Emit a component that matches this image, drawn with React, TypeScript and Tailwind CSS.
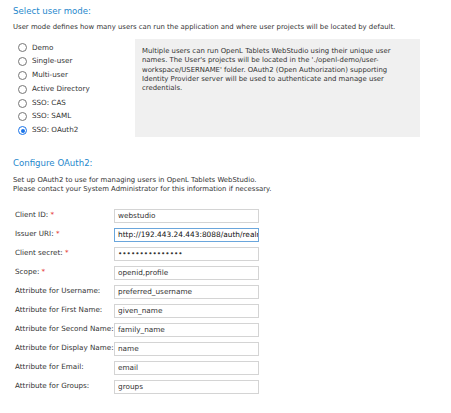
import { useState } from "react";

const modes = [
  "Demo",
  "Single-user",
  "Multi-user",
  "Active Directory",
  "SSO: CAS",
  "SSO: SAML",
  "SSO: OAuth2",
];

const fields = [
  { label: "Client ID:", value: "webstudio", required: true },
  { label: "Issuer URI:", value: "http://192.443.24.443:8088/auth/realms/openl", required: true, focused: true },
  { label: "Client secret:", value: "***************", required: true, secret: true },
  { label: "Scope:", value: "openid,profile", required: true },
  { label: "Attribute for Username:", value: "preferred_username" },
  { label: "Attribute for First Name:", value: "given_name" },
  { label: "Attribute for Second Name:", value: "family_name" },
  { label: "Attribute for Display Name:", value: "name" },
  { label: "Attribute for Email:", value: "email" },
  { label: "Attribute for Groups:", value: "groups" },
];

function Radio({ checked }: { checked: boolean }) {
  return checked ? (
    <span className="w-[9px] h-[9px] rounded-full border-[1.5px] border-[#1a73e8] flex items-center justify-center shrink-0">
      <span className="w-[4px] h-[4px] rounded-full bg-[#1a73e8]" />
    </span>
  ) : (
    <span className="w-[9px] h-[9px] rounded-full border border-[#767676] bg-white shrink-0" />
  );
}

export default function App() {
  const [mode, setMode] = useState("SSO: OAuth2");

  return (
    <div className="w-[451px] h-[413px] bg-white overflow-hidden pl-[13px] pt-[5px] text-[#333] font-['DejaVu_Sans',Verdana,sans-serif]">
      {/* === USER MODE === */}
      <h2 className="text-[8.6px] leading-[12px] text-[#1f88cc]">Select user mode:</h2>
      <p className="mt-[5px] text-[6.9px] leading-[10px]">
        User mode defines how many users can run the application and where user projects will be located by default.
      </p>

      <div className="mt-[7px] flex">
        <div className="w-[122px] pt-[2px]">
          {modes.map((m) => (
            <label
              key={m}
              onClick={() => setMode(m)}
              className="h-[13.8px] flex items-center gap-[5px] pl-[5px] text-[7.2px] cursor-pointer"
            >
              <Radio checked={mode === m} />
              {m}
            </label>
          ))}
        </div>
        <div className="w-[285px] h-[98px] bg-[#f0f0f0] pl-[7px] pr-[10px] pt-[8px] text-[6.9px] leading-[9.3px]">
          Multiple users can run OpenL Tablets WebStudio using their unique user names. The User's projects will be
          located in the './openl-demo/user-workspace/USERNAME' folder. OAuth2 (Open Authorization) supporting
          Identity Provider server will be used to authenticate and manage user credentials.
        </div>
      </div>

      {/* === OAUTH2 === */}
      <h2 className="mt-[19.7px] text-[8.6px] leading-[12px] text-[#1f88cc]">Configure OAuth2:</h2>
      <p className="mt-[6.8px] text-[6.9px] leading-[9px]">
        Set up OAuth2 to use for managing users in OpenL Tablets WebStudio.
        <br />
        Please contact your System Administrator for this information if necessary.
      </p>

      <div className="mt-[14.5px] flex flex-col gap-[5px] pl-[2px]">
        {fields.map((f) => (
          <div key={f.label} className="flex items-center h-[14px]">
            <span className="w-[99px] text-[7.2px] whitespace-nowrap">
              {f.label}
              {f.required && <span className="text-[#e53935]"> *</span>}
            </span>
            {f.focused ? (
              <div className="w-[145px] h-[14px] border border-[#6aa6dc] px-[3px] flex items-center overflow-hidden whitespace-nowrap text-[7.4px] text-[#111]">
                http://192.443.24
                <span className="inline-block w-px h-[9px] bg-[#111]" />
                .443:8088/auth/realr
              </div>
            ) : (
              <input
                readOnly
                type={f.secret ? "password" : "text"}
                defaultValue={f.value}
                className="w-[145px] h-[14px] border border-[#d4d4d4] px-[3px] text-[7.3px] text-[#333] outline-none bg-white"
              />
            )}
          </div>
        ))}
      </div>
    </div>
  );
}
